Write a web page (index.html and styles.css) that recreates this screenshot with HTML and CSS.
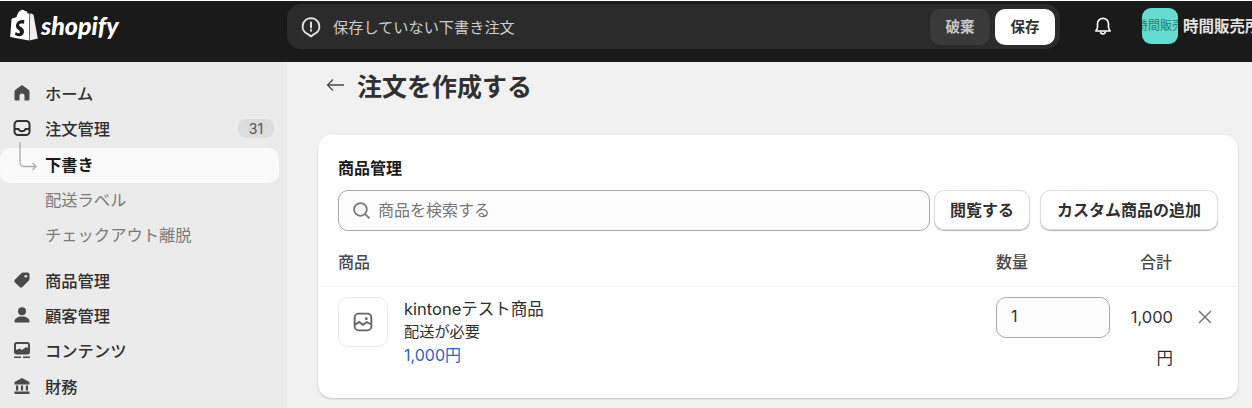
FILE: index.html
```html
<!DOCTYPE html>
<html lang="ja">
<head>
  <meta charset="UTF-8">
  <title>注文を作成する</title>
  <link rel="stylesheet" href="styles.css">
</head>
<body>

  <header class="topbar">
    <div class="brand">
      <svg class="brand-bag" viewBox="0 0 28 32" width="28" height="32">
        <path fill="#fff" d="M19 4.400 17.900 4.700C17.300 3 16.300 1.700 14.800 1.700 14.700 1.700 14.600 1.700 14.500 1.700 14 1.100 13.500.8 12.900.8 9 .8 7.100 5.700 6.500 8.200L2.800 9.300C1.700 9.700 1.600 9.700 1.500 10.800L.2 28 18.900 31.500 19.500 4.500Z"/>
        <path fill="#eee" d="M20.200 4.300 19.500 31.500 27.800 29.500 23.500 5.800C23.400 5.400 23.100 5.200 22.800 5.200L20.200 4.300Z"/>
        <path fill="#1a1a1a" d="M14.500 11.700 13.600 15C12.900 14.700 12 14.500 11 14.600 9.100 14.700 9.100 15.900 9.100 16.200 9.200 17.800 13.700 18.200 14 22.100 14.200 25.100 12.400 27.100 9.800 27.300 6.700 27.500 5 25.700 5 25.700L5.600 23C5.600 23 7.300 24.300 8.700 24.200 9.600 24.100 9.900 23.400 9.900 22.900 9.700 20.700 6.200 20.900 6 17.300 5.800 14.300 7.800 11.200 12.100 10.900 13.700 10.800 14.500 11.200 14.500 11.700Z"/>
      </svg>
      <span class="brand-name">shopify</span>
    </div>
    <div class="savebar">
      <svg class="savebar-icon" viewBox="0 0 20 20" width="22" height="22" fill="none" stroke="#e3e3e3" stroke-width="1.800">
        <path d="M10 2a7.500 7.500 0 0 1 3 14.400L10 18.500l-3-2.100A7.500 7.500 0 0 1 10 2Z" stroke-linejoin="round"/>
        <path d="M10 5.800v4.700M10 12.800v.7" stroke-linecap="round"/>
      </svg>
      <span class="savebar-text">保存していない下書き注文</span>
      <button class="btn-discard">破棄</button>
      <button class="btn-save">保存</button>
    </div>
    <svg class="bell" viewBox="0 0 20 20" width="22" height="22" fill="none" stroke="#fff" stroke-width="1.500">
      <path d="M3.500 14.500c1-1 1.500-2 1.500-3.500V8a5 5 0 0 1 10 0v3c0 1.500.5 2.500 1.500 3.500Z" stroke-linejoin="round"/>
      <path d="M7.800 15a2.200 2.200 0 0 0 4.400 0"/>
    </svg>
    <div class="avatar"><span>時間販売</span></div>
    <span class="store-name">時間販売所</span>
  </header>

  <div class="layout">
    <nav class="sidebar">
      <ul class="nav-group">
        <li class="nav-item">
          <svg class="nav-icon" viewBox="0 0 20 20"><path fill="#4a4a4a" d="M10 2 3.500 6.800C3 7.200 2.500 8 2.500 8.800V16c0 .9.700 1.600 1.600 1.600H7.500V13a2.500 2.500 0 0 1 5 0v4.600h3.400c.9 0 1.600-.7 1.600-1.600V8.800c0-.8-.5-1.600-1-2Z"/></svg>
          ホーム
        </li>
        <li class="nav-item">
          <svg class="nav-icon" viewBox="0 0 20 20" fill="none" stroke="#303030" stroke-width="2"><rect x="2.500" y="3" width="15" height="14" rx="3.500"/><path d="M3 11h3.500c.5 1.500 2 2.300 3.500 2.300s3-.8 3.500-2.300H17"/></svg>
          注文管理
          <span class="nav-badge">31</span>
        </li>
        <li class="nav-item nav-active">
          <svg class="nav-branch" viewBox="0 0 24 36" width="24" height="36" fill="none" stroke="#aaa" stroke-width="1.300"><path d="M4 0v20c0 3 1.500 4.500 4.500 4.500H20M16.500 21l3.500 3.500-3.500 3.500"/></svg>
          下書き
        </li>
        <li class="nav-item nav-sub">配送ラベル</li>
        <li class="nav-item nav-sub">チェックアウト離脱</li>
      </ul>
      <ul class="nav-group">
        <li class="nav-item">
          <svg class="nav-icon" viewBox="0 0 20 20"><path fill="#4a4a4a" d="M11 2.500h4.500c1.100 0 2 .9 2 2V9c0 .6-.2 1.100-.6 1.500l-6.500 6.500c-.8.8-2 .8-2.800 0l-4.600-4.600c-.8-.8-.8-2 0-2.800L9.500 3.100c.4-.4.900-.6 1.500-.6Z"/><circle cx="13.800" cy="6.200" r="1.300" fill="#ebebeb"/></svg>
          商品管理
        </li>
        <li class="nav-item">
          <svg class="nav-icon" viewBox="0 0 20 20"><circle cx="10" cy="6.200" r="4" fill="#4a4a4a"/><path fill="#4a4a4a" d="M2.500 16.500c0-3 3-5 7.500-5s7.500 2 7.500 5c0 .6-.5 1-1 1h-13c-.5 0-1-.4-1-1Z"/></svg>
          顧客管理
        </li>
        <li class="nav-item">
          <svg class="nav-icon" viewBox="0 0 20 20"><path fill="#4a4a4a" d="M4.500 2h11c1.400 0 2.500 1.100 2.500 2.500V12c0 1.400-1.100 2.500-2.500 2.500h-11C3.100 14.500 2 13.400 2 12V4.500C2 3.100 3.100 2 4.500 2Z"/><path fill="#ebebeb" d="M4 10V5c0-.6.400-1 1-1h10c.6 0 1 .4 1 1v3l-2-1-4 3-2-1.500Z"/><path fill="#4a4a4a" d="M2 16.500h7V18H2ZM11 16.500h7V18h-7Z"/></svg>
          コンテンツ
        </li>
        <li class="nav-item">
          <svg class="nav-icon" viewBox="0 0 20 20"><path fill="#4a4a4a" d="M10 2 2.500 6v2.500h15V6ZM4 9.500h2.200v5H4ZM8.900 9.500h2.200v5H8.900ZM13.800 9.500H16v5h-2.200ZM2.500 15.500h15V18h-15Z"/></svg>
          財務
        </li>
      </ul>
    </nav>

    <main class="content">
      <div class="page-title">
        <svg class="back-arrow" viewBox="0 0 18 14" width="18" height="14" fill="none" stroke="#4a4a4a" stroke-width="1.300"><path d="M18 7H1.500M7 1.500 1.500 7 7 12.500"/></svg>
        <h1>注文を作成する</h1>
      </div>

      <section class="card">
        <h2>商品管理</h2>
        <div class="search-row">
          <div class="search-box">
            <svg viewBox="0 0 18 18" width="19" height="19" fill="none" stroke="#777" stroke-width="1.700"><circle cx="8" cy="8" r="6"/><path d="m12.500 12.500 4 4"/></svg>
            <span>商品を検索する</span>
          </div>
          <button class="btn browse">閲覧する</button>
          <button class="btn">カスタム商品の追加</button>
        </div>
        <div class="table-head">
          <span class="col-product">商品</span>
          <span class="col-qty">数量</span>
          <span class="col-total">合計</span>
        </div>
        <div class="line-item">
          <div class="thumb">
            <svg viewBox="0 0 18 18" width="20" height="20" fill="none" stroke="#666" stroke-width="1.700"><rect x="1.500" y="1.500" width="15" height="15" rx="3.500"/><path d="M2 11.500 5.500 9 9 11.500 12.500 9l3.500 2"/><circle cx="12" cy="6" r="1.300" fill="#666" stroke="none"/></svg>
          </div>
          <div class="item-info">
            <div class="item-name">kintoneテスト商品</div>
            <div class="item-note">配送が必要</div>
            <div class="item-price">1,000円</div>
          </div>
          <div class="qty-input">1</div>
          <div class="item-total">1,000<br>円</div>
          <svg class="remove" viewBox="0 0 16 16" width="16" height="16" fill="none" stroke="#777" stroke-width="1.500"><path d="m2 2 12 12M14 2 2 14"/></svg>
        </div>
      </section>
    </main>
  </div>

</body>
</html>
```

FILE: styles.css
```css
* {
  box-sizing: border-box;
}
body {
  margin: 0;
  height: 408px;
  overflow: hidden;
  font-family: Inter, "Noto Sans CJK JP", sans-serif;
  font-size: 15px;
  color: #303030;
  background: #f1f1f1;
}
ul {
  list-style: none;
  margin: 0;
  padding: 0;
}
button {
  font-family: inherit;
}

.topbar {
  display: flex;
  align-items: flex-start;
  height: 62px;
  padding-top: 3px;
  background: #1a1a1a;
  border-top: 1px solid #fff;
  white-space: nowrap;
  overflow: hidden;
}
.brand {
  flex: none;
  display: flex;
  align-items: center;
  gap: 3px;
  width: 287px;
  padding: 5px 0 0 10px;
}
.brand-name {
  font-family: Lato, sans-serif;
  font-size: 25px;
  font-weight: 900;
  font-style: italic;
  color: #fff;
}
.savebar {
  display: flex;
  align-items: center;
  flex: none;
  width: 773px;
  height: 45px;
  padding: 0 5px 0 13px;
  background: #2b2b2b;
  border-radius: 14px;
}
.savebar-text {
  flex: 1;
  margin: 0 0 2px 11px;
  font-size: 15.200px;
  color: #cfcfcf;
}
.btn-discard, .btn-save {
  height: 36px;
  padding: 0 0 2px;
  border: none;
  border-radius: 10px;
  font-size: 14.500px;
  font-weight: 700;
}
.btn-discard {
  width: 60px;
  margin-right: 5px;
  background: #3a3a3a;
  color: #c8c8c8;
}
.btn-save {
  width: 60px;
  background: #fff;
  color: #303030;
}
.bell {
  flex: none;
  margin: 11px 0 0 32px;
}
.avatar {
  flex: none;
  display: flex;
  justify-content: center;
  width: 36px;
  height: 36px;
  margin: 4px 0 0 28px;
  overflow: hidden;
  background: #64dccf;
  border-radius: 9px;
  color: #2c7d78;
  font-size: 12px;
  line-height: 35px;
}
.avatar span {
  flex: none;
}
.store-name {
  flex: none;
  margin: 10px 0 0 5px;
  font-size: 15.500px;
  font-weight: 700;
  color: #e3e3e3;
}

.layout {
  display: flex;
  height: 346px;
}
.sidebar {
  flex: none;
  width: 287px;
  padding-top: 15px;
  background: #ebebeb;
}
.nav-group {
  margin-bottom: 10px;
}
.nav-item {
  position: relative;
  display: flex;
  align-items: center;
  gap: 13px;
  width: 279px;
  height: 35.300px;
  padding: 0 5px 3px 14px;
  font-size: 16.300px;
  font-weight: 500;
  color: #303030;
}
.nav-icon {
  flex: none;
  width: 20px;
  height: 20px;
  margin-left: -2px;
}
.nav-badge {
  margin-left: auto;
  padding: 1px 10px;
  min-width: 36px;
  border-radius: 8px;
  background: #dcdcdc;
  color: #555;
  font-size: 14px;
  font-weight: 400;
  text-align: center;
}
.nav-active {
  padding-left: 45px;
  border-radius: 10px;
  background: #fafafa;
  font-weight: 700;
  color: #1a1a1a;
}
.nav-branch {
  position: absolute;
  left: 16px;
  top: -6px;
}
.nav-sub {
  padding-left: 45px;
  font-weight: 400;
  color: #7a7a7a;
}

.content {
  flex: 1;
  padding: 0 14px 0 31px;
}
.page-title {
  display: flex;
  align-items: center;
  gap: 13px;
  height: 46px;
  padding-left: 8px;
}
.page-title h1 {
  margin: 0;
  font-size: 25px;
  font-weight: 700;
}
.card {
  height: 263px;
  margin-top: 27px;
  padding: 21px 20px 0;
  background: #fff;
  border-radius: 14px;
  box-shadow: 0 1px 2px rgba(0, 0, 0, 0.2);
}
.card h2 {
  margin: 0;
  font-size: 16px;
  line-height: 24px;
  font-weight: 700;
  color: #1a1a1a;
}
.search-row {
  display: flex;
  align-items: flex-start;
  gap: 10px;
  margin-top: 10px;
}
.search-box {
  display: flex;
  align-items: center;
  gap: 7px;
  flex: 1;
  height: 41px;
  margin-right: -6px;
  padding: 0 0 3px 13px;
  border: 1px solid #a8a8a8;
  border-radius: 10px;
  background: #fdfdfd;
  color: #777;
  font-size: 16px;
}
.search-box svg {
  margin-top: 3px;
}
.btn {
  flex: none;
  height: 40px;
  padding: 0 0 3px;
  width: 178px;
  border: 1px solid #ddd;
  border-radius: 10px;
  background: #fff;
  box-shadow: 0 1px 1px rgba(0, 0, 0, 0.3);
  font-size: 16px;
  font-weight: 700;
  color: #303030;
}
.browse {
  width: 96px;
}
.table-head {
  display: flex;
  align-items: center;
  height: 56px;
  margin: 0 -20px;
  padding: 5px 0 0 20px;
  border-bottom: 1px solid #f1f1f1;
  font-weight: 500;
  font-size: 16px;
  color: #4a4a4a;
}
.col-product {
  width: 658px;
}
.col-qty {
  width: 144px;
}
.line-item {
  display: flex;
  align-items: flex-start;
  padding-top: 10px;
}
.thumb {
  flex: none;
  display: flex;
  align-items: center;
  justify-content: center;
  width: 50px;
  height: 50px;
  border: 1px solid #ebebeb;
  border-radius: 10px;
}
.item-info {
  width: 592px;
  margin-left: 16px;
  line-height: 22.500px;
}
.item-name {
  font-size: 16.500px;
  line-height: 24px;
}
.item-note {
  font-size: 15.200px;
}
.item-price {
  color: #2c5fd1;
  font-size: 16px;
}
.qty-input {
  flex: none;
  width: 114px;
  height: 41px;
  padding-left: 14px;
  border: 1px solid #a8a8a8;
  border-radius: 10px;
  background: #fdfdfd;
  font-size: 16px;
  line-height: 37px;
}
.item-total {
  width: 63px;
  font-size: 16.500px;
  line-height: 41px;
  text-align: right;
}
.remove {
  flex: none;
  margin: 12px 0 0 24px;
}
```
